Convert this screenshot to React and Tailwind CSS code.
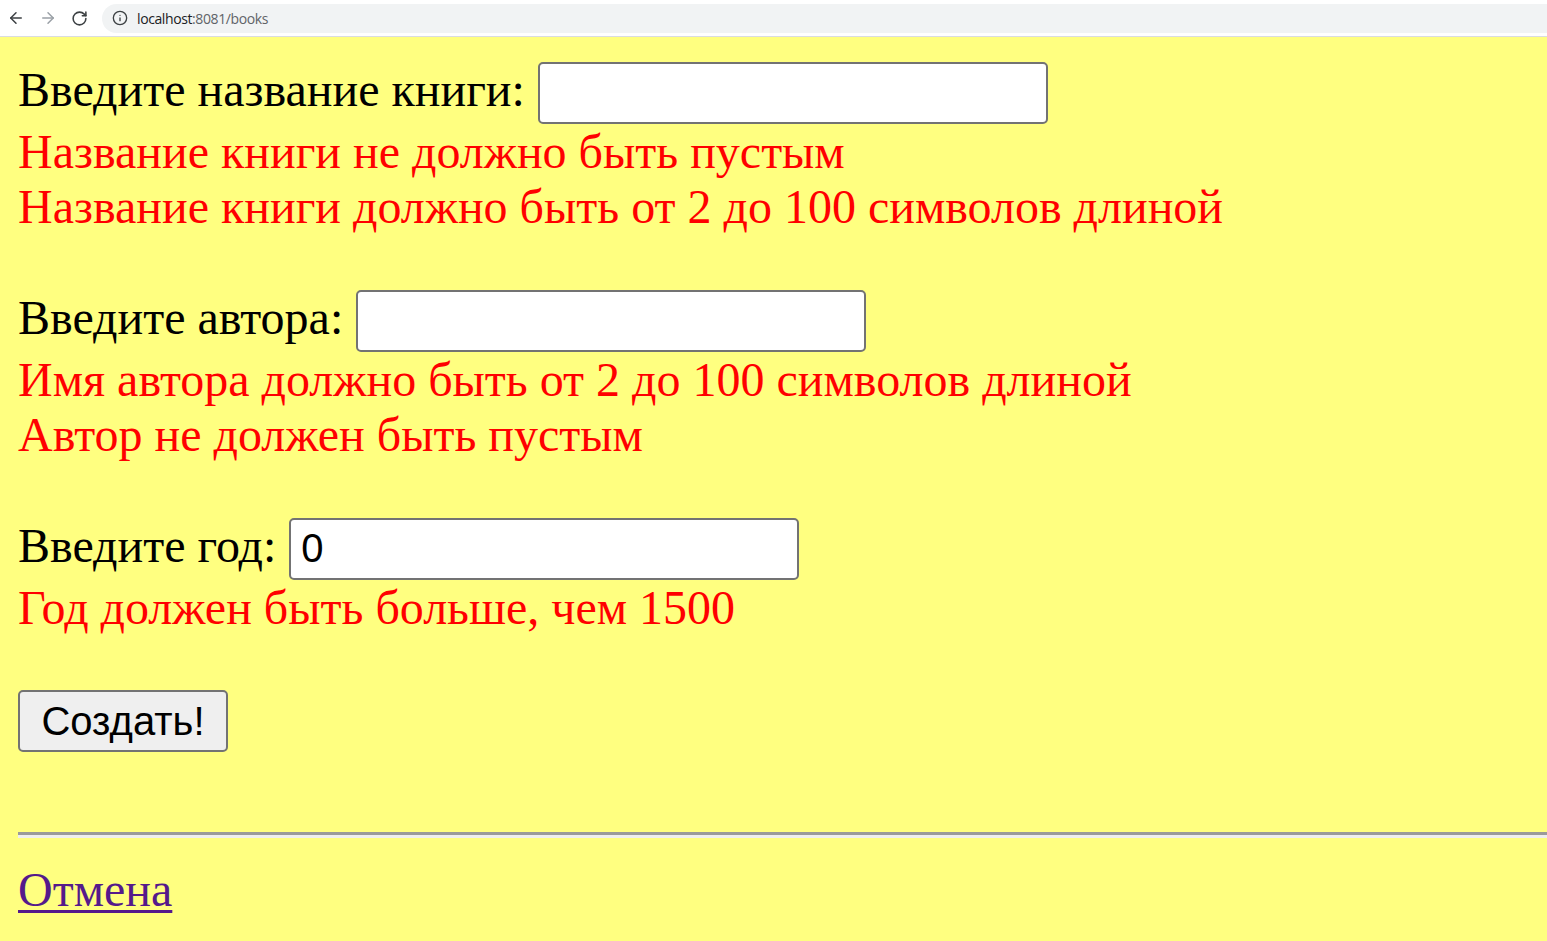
import { ArrowLeft, ArrowRight, RotateCw, Info } from 'lucide-react'

// верхняя панель браузера
function TopBar() {
  return (
    <div className="h-[37px] bg-white border-b border-[#dadce0] flex items-center">
      <div className="flex items-center w-[102px] pl-[7px] gap-[14px] text-[#3c4043]">
        <ArrowLeft size={18} strokeWidth={2} />
        <ArrowRight size={18} strokeWidth={2} className="text-[#9aa0a6]" />
        <RotateCw size={17} strokeWidth={2.2} />
      </div>
      <div className="flex-1 h-[29px] rounded-l-full bg-[#f1f3f4] flex items-center pl-[10px] gap-[9px]">
        <Info size={16} strokeWidth={2} className="text-[#3c4043]" />
        <span className="text-[14px] font-['Open_Sans',sans-serif] tracking-[-0.4px] text-[#202124]">
          localhost<span className="text-[#5f6368]">:8081/books</span>
        </span>
      </div>
    </div>
  )
}

function Field({ label, value, errors }) {
  return (
    <div className="flex flex-col">
      <div className="flex items-center h-[63px]">
        <span className="leading-[55px] mb-[6px] text-black">{label}</span>
        <input
          readOnly
          value={value}
          className="ml-[13px] w-[510px] h-[62px] bg-white border-2 border-[#737373] rounded-[5px] px-[10px] text-[40px] font-['Liberation_Sans',sans-serif] text-black outline-none"
        />
      </div>
      {errors.map((e) => (
        <div key={e} className="leading-[55px] h-[55px] text-[#ff0000]">{e}</div>
      ))}
      <div className="h-[55px]" />
    </div>
  )
}

export default function App() {
  return (
    <div className="min-h-screen w-full bg-[#ffff80] font-['Liberation_Serif',serif] text-[48px] overflow-hidden">
      <TopBar />
      <main className="pl-[18px] pt-[24px]">
        <Field
          label="Введите название книги:"
          value=""
          errors={['Название книги не должно быть пустым', 'Название книги должно быть от 2 до 100 символов длиной']}
        />
        <Field
          label="Введите автора:"
          value=""
          errors={['Имя автора должно быть от 2 до 100 символов длиной', 'Автор не должен быть пустым']}
        />
        <Field label="Введите год:" value="0" errors={['Год должен быть больше, чем 1500']} />

        <button className="block w-[210px] h-[62px] bg-[#efefef] border-2 border-[#737373] rounded-[5px] text-[40px] font-['Liberation_Sans',sans-serif] text-black leading-none">
          Создать!
        </button>

        <div className="mt-[80px] border-t-[3px] border-t-[#9a9a9a] border-b-[3px] border-b-[#eeeeee]" />

        <div className="mt-[24px] leading-[55px]">
          <a href="#" className="text-[#551a8b] underline decoration-[3px] underline-offset-[4px]">Отмена</a>
        </div>
      </main>
    </div>
  )
}
